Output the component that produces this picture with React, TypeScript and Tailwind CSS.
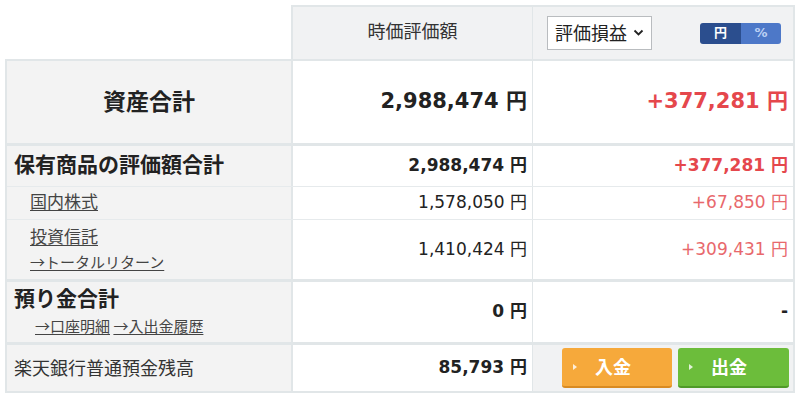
import React from 'react';

const font = { fontFamily: '"DejaVu Sans", "Noto Sans CJK JP", sans-serif' };
const jpFont = { fontFamily: '"Noto Sans CJK JP", sans-serif' };

const labelCell = 'w-[286px] shrink-0 bg-[#f3f3f3] border-r-2 border-[#e1e6e8]';
const valueCell = 'w-[240px] shrink-0 border-r border-[#e1e6e8] flex items-center justify-end pr-[5px] text-[#222]';
const profitCell = 'flex-1 flex items-center justify-end pr-[5px]';

const Triangle = () => (
  <span className="inline-block w-0 h-0 border-y-[3px] border-y-transparent border-l-[4px] border-l-white/80 mr-[18px]" />
);

export default function App() {
  return (
    <div className="w-[800px] h-[397px] bg-white pt-[5px] pl-[5px] text-[#222]" style={font}>
      {/* header */}
      <div className="flex h-[54px]">
        <div className="w-[286px] shrink-0" />
        <div className="flex w-[504px] bg-[#f1f2f3] border-t-2 border-l-2 border-r-2 border-[#e1e6e8]">
          <div className="w-[240px] shrink-0 border-r border-[#e1e6e8] flex items-center justify-center pb-[4px] text-[18px] text-[#333]">
            時価評価額
          </div>
          <div className="flex-1 flex items-center pl-[14px] pr-[12px] justify-between">
            <div className="h-[34px] w-[105px] bg-white border border-[#b9bcbf] flex items-center pl-[7px] gap-[6px] text-[18px] text-[#222]">
              評価損益
              <svg width="11" height="8" viewBox="0 0 11 8">
                <path d="M1.5 1.5 L5.5 5.5 L9.5 1.5" fill="none" stroke="#222" strokeWidth="1.8" />
              </svg>
            </div>
            <div className="flex h-[21px] rounded-[3px] overflow-hidden text-[13px] font-bold">
              <div className="w-[41px] bg-[#2b4e8e] text-white flex items-center justify-center">円</div>
              <div className="w-[40px] bg-[#4d78c8] text-[#bcd1f5] flex items-center justify-center">%</div>
            </div>
          </div>
        </div>
      </div>

      {/* body */}
      <div className="w-[790px] border-2 border-[#e1e6e8]">
        {/* 資産合計 */}
        <div className="flex h-[82px]">
          <div className={`${labelCell} flex items-center justify-center text-[23px] font-bold`}>資産合計</div>
          <div className={`${valueCell} text-[21px] font-bold`}>2,988,474 円</div>
          <div className={`${profitCell} text-[21px] font-bold text-[#e5474c]`}>+377,281 円</div>
        </div>
        <div className="h-[3px] bg-[#e1e6e8]" />

        {/* 保有商品 */}
        <div className="flex h-[41px] border-b border-[#e6eaec]">
          <div className={`${labelCell} flex items-center pl-[7px] text-[21px] font-bold`}>保有商品の評価額合計</div>
          <div className={`${valueCell} text-[17px] font-bold`}>2,988,474 円</div>
          <div className={`${profitCell} text-[17px] font-bold text-[#e5474c]`}>+377,281 円</div>
        </div>

        {/* 国内株式 */}
        <div className="flex h-[33px] border-b border-[#e6eaec]">
          <div className={`${labelCell} flex items-center pl-[23px] text-[17px] text-[#444]`}>
            <span className="underline underline-offset-2">国内株式</span>
          </div>
          <div className={`${valueCell} text-[17px]`}>1,578,050 円</div>
          <div className={`${profitCell} text-[17px] text-[#e8686c]`}>+67,850 円</div>
        </div>

        {/* 投資信託 */}
        <div className="flex h-[59px]">
          <div className={`${labelCell} flex flex-col items-start pl-[23px] pt-[5px] text-[#444]`}>
            <span className="text-[17px] leading-[24px] underline underline-offset-2">投資信託</span>
            <span className="text-[15px] leading-[20px] mt-[3px] underline underline-offset-2" style={jpFont}>→トータルリターン</span>
          </div>
          <div className={`${valueCell} text-[17px]`}>1,410,424 円</div>
          <div className={`${profitCell} text-[17px] text-[#e8686c]`}>+309,431 円</div>
        </div>
        <div className="h-[3px] bg-[#e1e6e8]" />

        {/* 預り金合計 */}
        <div className="flex h-[60px]">
          <div className={`${labelCell} flex flex-col items-start pl-[7px] pt-[3px]`}>
            <span className="text-[21px] leading-[28px] font-bold">預り金合計</span>
            <span className="text-[15px] leading-[20px] mt-[3px] ml-[21px] text-[#444]" style={jpFont}>
              <span className="underline underline-offset-2">→口座明細</span>{' '}
              <span className="underline underline-offset-2">→入出金履歴</span>
            </span>
          </div>
          <div className={`${valueCell} text-[17px] font-bold`}>0 円</div>
          <div className={`${profitCell} text-[17px] font-bold`}>-</div>
        </div>
        <div className="h-[3px] bg-[#e1e6e8]" />

        {/* 楽天銀行 */}
        <div className="flex h-[46px]">
          <div className={`${labelCell} flex items-center pl-[7px] text-[18px] text-[#333]`}>楽天銀行普通預金残高</div>
          <div className={`${valueCell} text-[17px] font-bold`}>85,793 円</div>
          <div className="flex-1 flex items-center justify-end gap-[6px] pr-[4px] bg-[#f1f2f3]">
            <button className="w-[110px] h-[40px] rounded-[3px] bg-[#f6a93b] border-b-2 border-[#d98b22] flex items-center pl-[11px] text-white text-[18px] font-bold">
              <Triangle />入金
            </button>
            <button className="w-[111px] h-[40px] rounded-[3px] bg-[#6cbd3b] border-b-2 border-[#4f9a28] flex items-center pl-[11px] text-white text-[18px] font-bold">
              <Triangle />出金
            </button>
          </div>
        </div>
      </div>
    </div>
  );
}
